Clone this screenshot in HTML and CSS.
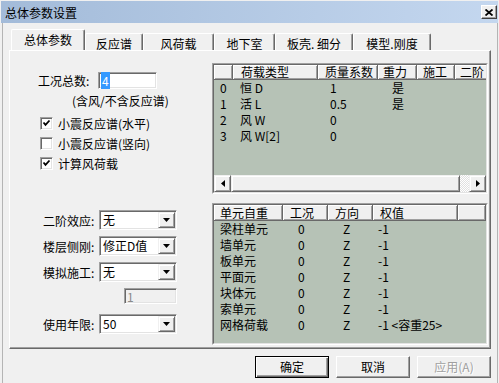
FILE: index.html
```html
<!DOCTYPE html>
<html>
<head>
<meta charset="utf-8">
<title>总体参数设置</title>
<link rel="stylesheet" href="styles.css">
</head>
<body>
<div class="titlebar">
    <span class="title">总体参数设置</span>
    <span class="close-btn">
        <svg width="8" height="7" viewBox="0 0 8 7"><path d="M0.5 0.5 L7.5 6.5 M7.5 0.5 L0.5 6.5" stroke="#000" stroke-width="1.8"/></svg>
    </span>
</div>
<div class="frame">
    <div class="tabs">
        <div class="tab tab-main active">总体参数</div>
        <div class="tab tab-spec">反应谱</div>
        <div class="tab tab-wind">风荷载</div>
        <div class="tab tab-base">地下室</div>
        <div class="tab tab-shell">板壳. 细分</div>
        <div class="tab tab-model">模型.刚度</div>
    </div>
    <div class="panel">
        <div class="left-col">
            <div class="count-row">
                <span class="count-label">工况总数:</span>
                <span class="edit"><span class="sel">4</span></span>
            </div>
            <div class="note">(含风/不含反应谱)</div>
            <div class="checks">
                <div class="check">
                    <span class="box"><svg width="9" height="9" viewBox="0 0 9 9"><path d="M1.5 3.5 L3.5 5.8 L7.5 1.5" fill="none" stroke="#000" stroke-width="1.8"/></svg></span>
                    小震反应谱(水平)
                </div>
                <div class="check">
                    <span class="box"></span>
                    小震反应谱(竖向)
                </div>
                <div class="check">
                    <span class="box"><svg width="9" height="9" viewBox="0 0 9 9"><path d="M1.5 3.5 L3.5 5.8 L7.5 1.5" fill="none" stroke="#000" stroke-width="1.8"/></svg></span>
                    计算风荷载
                </div>
            </div>
            <div class="options">
                <div class="opt-row">
                    <span class="opt-label">二阶效应:</span>
                    <span class="combo"><span class="combo-val">无</span><span class="drop"><svg width="7" height="4" viewBox="0 0 7 4"><polygon points="0,0 7,0 3.5,4" fill="#000"/></svg></span></span>
                </div>
                <div class="opt-row">
                    <span class="opt-label">楼层侧刚:</span>
                    <span class="combo"><span class="combo-val">修正D值</span><span class="drop"><svg width="7" height="4" viewBox="0 0 7 4"><polygon points="0,0 7,0 3.5,4" fill="#000"/></svg></span></span>
                </div>
                <div class="opt-row">
                    <span class="opt-label">模拟施工:</span>
                    <span class="combo"><span class="combo-val">无</span><span class="drop"><svg width="7" height="4" viewBox="0 0 7 4"><polygon points="0,0 7,0 3.5,4" fill="#000"/></svg></span></span>
                </div>
                <div class="opt-row opt-small">
                    <span class="edit edit-off">1</span>
                </div>
                <div class="opt-row">
                    <span class="opt-label">使用年限:</span>
                    <span class="combo"><span class="combo-val">50</span><span class="drop"><svg width="7" height="4" viewBox="0 0 7 4"><polygon points="0,0 7,0 3.5,4" fill="#000"/></svg></span></span>
                </div>
            </div>
        </div>
        <div class="right-col">
            <div class="list list-load">
                <div class="list-in">
                    <div class="head load-cols">
                        <span></span><span>荷载类型</span><span>质量系数</span><span>重力</span><span>施工</span><span>二阶</span>
                    </div>
                    <div class="list-body">
                        <div class="list-row load-cols"><span>0</span><span>恒 D</span><span>1</span><span>是</span></div>
                        <div class="list-row load-cols"><span>1</span><span>活 L</span><span>0.5</span><span>是</span></div>
                        <div class="list-row load-cols"><span>2</span><span>风 W</span><span>0</span><span></span></div>
                        <div class="list-row load-cols"><span>3</span><span>风 W[2]</span><span>0</span><span></span></div>
                    </div>
                    <div class="hscroll">
                        <span class="sb-btn"><svg width="4" height="7" viewBox="0 0 4 7"><polygon points="4,0 4,7 0,3.5" fill="#000"/></svg></span>
                        <span class="sb-thumb"></span>
                        <span class="sb-track"></span>
                        <span class="sb-btn"><svg width="4" height="7" viewBox="0 0 4 7"><polygon points="0,0 0,7 4,3.5" fill="#000"/></svg></span>
                    </div>
                </div>
            </div>
            <div class="list list-weight">
                <div class="list-in">
                    <div class="head weight-cols">
                        <span>单元自重</span><span>工况</span><span>方向</span><span>权值</span><span></span>
                    </div>
                    <div class="list-body">
                        <div class="list-row weight-cols"><span>梁柱单元</span><span>0</span><span>Z</span><span>-1</span></div>
                        <div class="list-row weight-cols"><span>墙单元</span><span>0</span><span>Z</span><span>-1</span></div>
                        <div class="list-row weight-cols"><span>板单元</span><span>0</span><span>Z</span><span>-1</span></div>
                        <div class="list-row weight-cols"><span>平面元</span><span>0</span><span>Z</span><span>-1</span></div>
                        <div class="list-row weight-cols"><span>块体元</span><span>0</span><span>Z</span><span>-1</span></div>
                        <div class="list-row weight-cols"><span>索单元</span><span>0</span><span>Z</span><span>-1</span></div>
                        <div class="list-row weight-cols"><span>网格荷载</span><span>0</span><span>Z</span><span>-1 &lt;容重25&gt;</span></div>
                    </div>
                </div>
            </div>
        </div>
    </div>
    <div class="buttons">
        <span class="btn btn-default">确定</span>
        <span class="btn">取消</span>
        <span class="btn btn-off">应用(A)</span>
    </div>
</div>
</body>
</html>
```

FILE: styles.css
```css
*
{
    box-sizing: border-box;
}
body
{
    margin: 0;
    width: 499px;
    height: 383px;
    overflow: hidden;
    background: #f0f0f0;
    font: 12px "Noto Sans CJK SC", "Noto Sans", sans-serif;
    color: #000;
}

/* title bar */
.titlebar
{
    display: flex;
    align-items: center;
    justify-content: space-between;
    height: 22px;
    margin: 1px 1px 0 1px;
    padding: 0 1px 0 4px;
    background: linear-gradient(to right, #a3bbd9, #c4d7ef);
}
.title
{
    line-height: 16px;
    padding-top: 2px;
}
.close-btn
{
    display: flex;
    align-items: center;
    justify-content: center;
    width: 16px;
    height: 14px;
    background: #f0f0f0;
    border: 1px solid;
    border-color: #fff #404040 #404040 #fff;
    box-shadow: inset -1px -1px #a0a0a0;
}

.frame
{
    height: 360px;
    margin: 0 1px 0 2px;
    border-left: 1px solid #b4b4b4;
    border-right: 1px solid #b4b4b4;
}

/* tabs */
.tabs
{
    display: flex;
    align-items: flex-end;
    height: 27px;
    padding-left: 8px;
}
.tab
{
    height: 17px;
    padding-top: 4px;
    line-height: 12px;
    text-align: center;
    white-space: nowrap;
    border: 1px solid;
    border-bottom: none;
    border-color: #fff #696969 transparent #fff;
    border-radius: 2px 2px 0 0;
    box-shadow: inset -1px 0 #a0a0a0;
}
.tab.active
{
    height: 21px;
    padding-top: 4px;
}
.tab-main { width: 74px; }
.tab-spec { width: 58px; }
.tab-wind { width: 71px; }
.tab-base { width: 61px; }
.tab-shell { width: 78px; }
.tab-model { width: 78px; }

.panel
{
    display: flex;
    width: 482px;
    height: 299px;
    margin-left: 6px;
    border: 1px solid;
    border-color: #fff #696969 #696969 #fff;
    box-shadow: inset -1px -1px #a0a0a0;
}

/* left side */
.left-col
{
    width: 202px;
    padding-top: 21px;
}
.count-row
{
    display: flex;
    align-items: center;
    height: 17px;
    padding-left: 28px;
}
.count-label
{
    width: 60px;
}
.edit
{
    display: block;
    width: 59px;
    height: 17px;
    padding: 1px 0 0 2px;
    line-height: 13px;
    background: #fff;
    border: 1px solid;
    border-color: #a0a0a0 #fff #fff #a0a0a0;
    box-shadow: inset 1px 1px #696969, inset -1px -1px #e3e3e3;
}
.sel
{
    padding: 0 1px;
    background: #3399ff;
    color: #fff;
}
.edit-off
{
    width: 53px;
    height: 16px;
    margin-left: 114px;
    background: #f0f0f0;
    color: #8a8a8a;
}
.note
{
    margin-top: 4px;
    padding-left: 62px;
    line-height: 16px;
}
.checks
{
    margin-top: 4px;
}
.check
{
    display: flex;
    align-items: center;
    height: 20px;
    padding-left: 30px;
}
.box
{
    display: flex;
    align-items: center;
    justify-content: center;
    width: 13px;
    height: 13px;
    margin-right: 5px;
    background: #fff;
    border: 1px solid;
    border-color: #a0a0a0 #fff #fff #a0a0a0;
    box-shadow: inset 1px 1px #696969, inset -1px -1px #e3e3e3;
}
.options
{
    margin-top: 37px;
}
.opt-row
{
    display: flex;
    align-items: center;
    height: 20px;
    margin-bottom: 6px;
    padding-left: 33px;
}
.opt-small
{
    align-items: flex-start;
    padding-left: 0;
}
.opt-label
{
    width: 56px;
    white-space: nowrap;
}
.combo
{
    display: flex;
    align-items: center;
    width: 78px;
    height: 20px;
    padding: 1px;
    background: #fff;
    border: 1px solid;
    border-color: #a0a0a0 #fff #fff #a0a0a0;
    box-shadow: inset 1px 1px #696969, inset -1px -1px #e3e3e3;
}
.combo-val
{
    flex: 1;
    padding-left: 2px;
    line-height: 14px;
}
.drop
{
    display: flex;
    align-items: center;
    justify-content: center;
    width: 17px;
    height: 16px;
    background: #f0f0f0;
    border: 1px solid;
    border-color: #f0f0f0 #696969 #696969 #f0f0f0;
    box-shadow: inset 1px 1px #fff, inset -1px -1px #a0a0a0;
}

/* right side lists */
.right-col
{
    width: 277px;
    padding-top: 12px;
}
.list
{
    width: 276px;
    border: 1px solid;
    border-color: #a0a0a0 #fff #fff #a0a0a0;
}
.list-load
{
    height: 131px;
}
.list-weight
{
    height: 142px;
    margin-top: 9px;
}
.list-in
{
    display: flex;
    flex-direction: column;
    height: 100%;
    overflow: hidden;
    background: #b6c2b6;
    border: 1px solid;
    border-color: #696969 #e3e3e3 #e3e3e3 #696969;
}
.head
{
    display: grid;
    flex: none;
    height: 15px;
    background: #f0f0f0;
}
.list-weight .head
{
    height: 16px;
}
.head span
{
    padding-left: 6px;
    line-height: 14px;
    white-space: nowrap;
    border-right: 1px solid #696969;
    border-bottom: 1px solid #696969;
    box-shadow: inset 1px 1px #fff, inset -1px -1px #a0a0a0;
}
.list-weight .head span
{
    line-height: 15px;
}
.list-body
{
    flex: 1;
}
.list-row
{
    display: grid;
    height: 16px;
    line-height: 16px;
    white-space: nowrap;
}
.load-cols
{
    grid-template-columns: 19px 85px 60px 39px 38px 60px;
}
.weight-cols
{
    grid-template-columns: 69px 45px 45px 85px 28px;
}
.load-cols.head span:nth-child(2) { padding-left: 8px; }
.load-cols.head span:nth-child(3) { padding-left: 7px; }
.load-cols.head span:nth-child(4) { padding-left: 5px; }
.load-cols.head span:nth-child(6) { padding-left: 5px; }
.load-cols.list-row span:nth-child(1) { padding-left: 6px; }
.load-cols.list-row span:nth-child(2) { padding-left: 7px; }
.load-cols.list-row span:nth-child(3) { padding-left: 12px; }
.load-cols.list-row span:nth-child(4) { padding-left: 14px; }
.weight-cols.head span:nth-child(n+2) { padding-left: 7px; }
.weight-cols.list-row span:nth-child(1) { padding-left: 6px; }
.weight-cols.list-row span:nth-child(2) { padding-left: 15px; }
.weight-cols.list-row span:nth-child(3) { padding-left: 15px; }
.weight-cols.list-row span:nth-child(4) { padding-left: 5px; }

.hscroll
{
    display: flex;
    flex: none;
    height: 17px;
    background: repeating-conic-gradient(#fff 0 25%, #e0e0e0 0 50%) 0 0 / 2px 2px;
}
.sb-btn,
.sb-thumb
{
    display: flex;
    align-items: center;
    justify-content: center;
    width: 17px;
    height: 17px;
    background: #f0f0f0;
    border: 1px solid;
    border-color: #f0f0f0 #696969 #696969 #f0f0f0;
    box-shadow: inset 1px 1px #fff, inset -1px -1px #a0a0a0;
}
.sb-thumb
{
    width: 229px;
}
.sb-track
{
    flex: 1;
}

/* dialog buttons */
.buttons
{
    display: flex;
    justify-content: flex-end;
    gap: 7px;
    padding: 7px 6px 0 0;
}
.btn
{
    display: flex;
    align-items: center;
    justify-content: center;
    width: 74px;
    height: 22px;
    line-height: 14px;
    border: 1px solid;
    border-color: #fff #696969 #696969 #fff;
    box-shadow: inset -1px -1px #a0a0a0;
}
.btn-default
{
    border-color: #000;
    box-shadow: inset 1px 1px #fff, inset -1px -1px #696969, inset -2px -2px #a0a0a0;
}
.btn-off
{
    color: #a0a0a0;
    text-shadow: 1px 1px #fff;
}
```
